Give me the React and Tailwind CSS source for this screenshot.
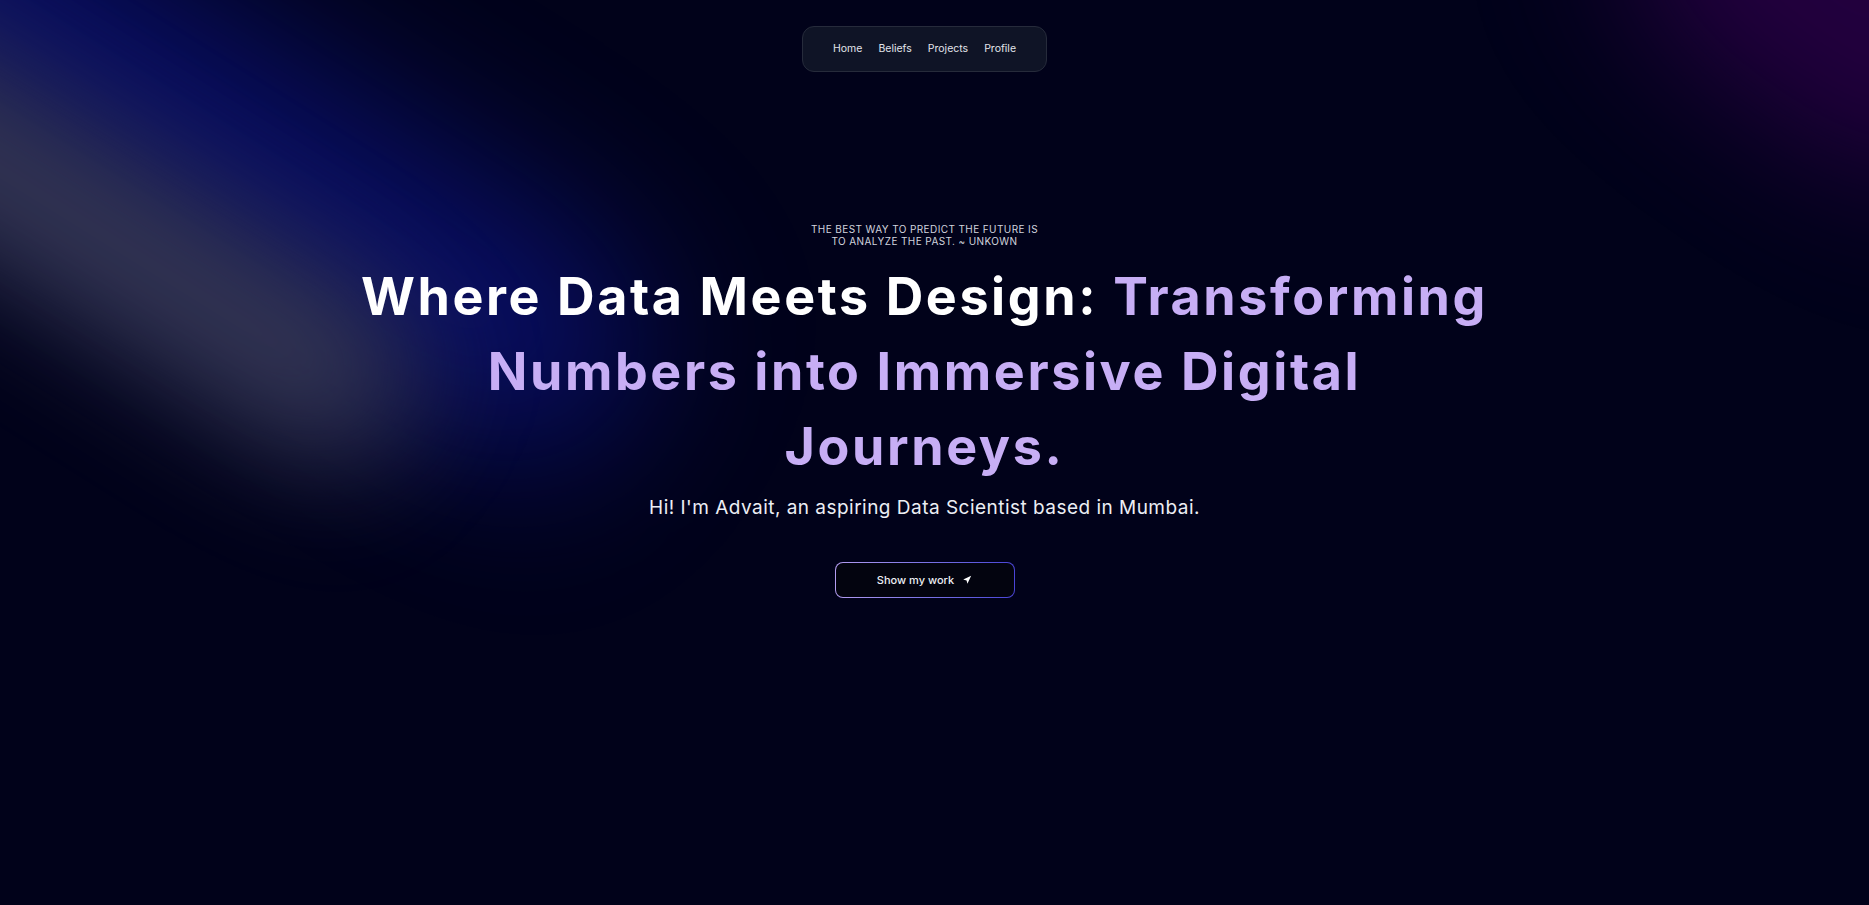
import React from "react";

const links = ["Home", "Beliefs", "Projects", "Profile"];

function Glow() {
  return (
    <div className="pointer-events-none absolute inset-0 overflow-hidden">
      {/* blue haze above the beam */}
      <div className="absolute left-[-300px] top-[20px] h-[240px] w-[1000px] rotate-[32deg] rounded-full bg-[#0b1278] opacity-80 blur-[80px]" />
      {/* grey beam */}
      <div className="absolute left-[-320px] top-[130px] h-[170px] w-[780px] rotate-[32deg] rounded-full bg-[#3a3c56] opacity-90 blur-[60px]" />
      {/* purple corner */}
      <div className="absolute right-[-200px] top-[-150px] h-[280px] w-[460px] rotate-[35deg] rounded-full bg-[#2c0048] opacity-80 blur-[70px]" />
    </div>
  );
}

export default function App() {
  return (
    <div
      className="relative h-screen w-full overflow-hidden bg-[#01021a] text-white"
      style={{ fontFamily: "Inter, 'Noto Sans', sans-serif" }}
    >
      <Glow />

      <div className="relative flex flex-col items-center pt-[26px] pr-[20px]">
        {/* Nav */}
        <nav className="flex h-[46px] w-[245px] items-center justify-center gap-4 rounded-xl border border-[#262b3b] bg-[#0f1426] text-[10.5px] text-[#e2e4ea]">
          {links.map((l) => (
            <a key={l} href="#" className="hover:text-white">
              {l}
            </a>
          ))}
        </nav>

        {/* Hero */}
        <p className="mt-[151px] text-center text-[10px] leading-[12px] tracking-[0.04em] text-[#d2d4de] uppercase">
          The best way to predict the future is
          <br />
          to analyze the past. ~ Unkown
        </p>

        <h1 className="mt-[12px] max-w-[1160px] text-center text-[52px] leading-[75px] font-bold tracking-[0.05em]">
          <span className="text-white">Where Data Meets Design:</span>{" "}
          <span className="text-[#c7aef5]">Transforming</span>{" "}
          <span className="text-[#c7aef5]">Numbers into Immersive Digital Journeys.</span>
        </h1>

        <p className="mt-[10px] text-[19px] leading-7 tracking-wide text-[#eceef4]">
          Hi! I'm Advait, an aspiring Data Scientist based in Mumbai.
        </p>

        <button className="mt-[40px] rounded-lg bg-gradient-to-r from-[#b39cf0] to-[#4a44d6] p-px">
          <span className="flex h-[34px] w-[178px] items-center justify-center gap-2 rounded-[7px] bg-[#03040f] text-[11px] font-medium text-[#eceef4]">
            Show my work
            <svg viewBox="0 0 24 24" className="h-[10px] w-[10px]" fill="white">
              <polygon points="3 11 22 2 13 21 11 13 3 11" />
            </svg>
          </span>
        </button>
      </div>
    </div>
  );
}
